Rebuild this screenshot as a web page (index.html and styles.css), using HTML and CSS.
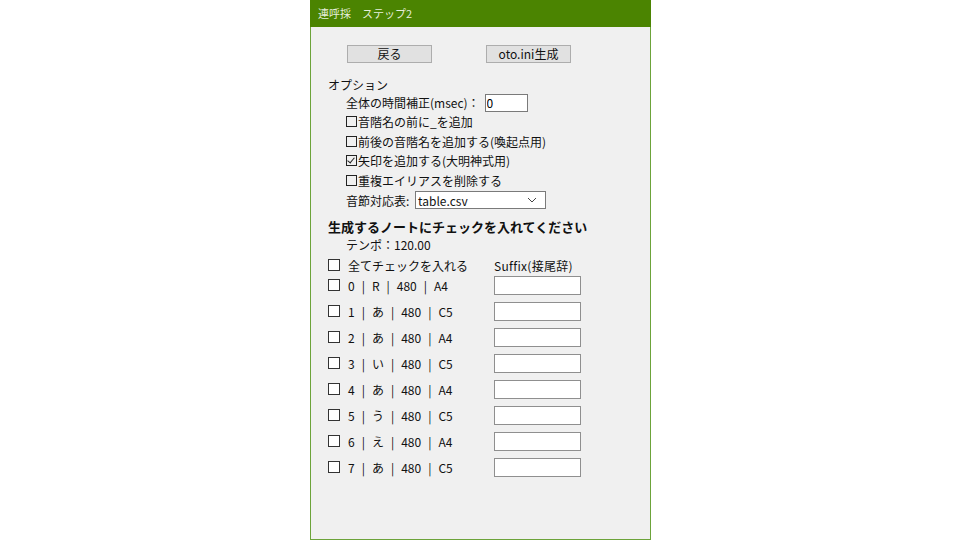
FILE: index.html
```html
<!DOCTYPE html>
<html lang="ja">
<head>
    <meta charset="UTF-8">
    <title>連呼採 ステップ2</title>
    <link rel="stylesheet" href="styles.css">
</head>
<body>

<div class="window">
    <div class="titlebar">連呼採　ステップ2</div>

    <div class="content">
        <div class="buttons">
            <button class="btn">戻る</button>
            <button class="btn">oto.ini生成</button>
        </div>

        <div class="options">
            <div class="section-label">オプション</div>
            <div class="indent">
                <div class="opt-row">
                    <span>全体の時間補正(msec)：</span>
                    <input type="text" class="num-input" value="0">
                </div>
                <div class="opt-row"><span class="box"></span>音階名の前に_を追加</div>
                <div class="opt-row"><span class="box"></span>前後の音階名を追加する(喚起点用)</div>
                <div class="opt-row"><span class="box checked"></span>矢印を追加する(大明神式用)</div>
                <div class="opt-row"><span class="box"></span>重複エイリアスを削除する</div>
                <div class="opt-row select-row">
                    <span class="select-label">音節対応表:</span>
                    <div class="select">
                        <span>table.csv</span>
                        <svg width="10" height="6" viewBox="0 0 10 6"><path d="M1 1 L5 5 L9 1" fill="none" stroke="#444" stroke-width="1"/></svg>
                    </div>
                </div>
            </div>
        </div>

        <div class="notes">
            <div class="heading">生成するノートにチェックを入れてください</div>
            <div class="tempo">テンポ：120.00</div>
            <div class="note-head">
                <label class="note-label"><span class="nbox"></span>全てチェックを入れる</label>
                <span class="suffix-label">Suffix(接尾辞)</span>
            </div>
            <div class="note-list">
                <div class="note-row">
                    <label class="note-label"><span class="nbox"></span><span class="parts"><span>0</span><span>|</span><span>R</span><span>|</span><span>480</span><span>|</span><span>A4</span></span></label>
                    <input type="text" class="suffix">
                </div>
                <div class="note-row">
                    <label class="note-label"><span class="nbox"></span><span class="parts"><span>1</span><span>|</span><span>あ</span><span>|</span><span>480</span><span>|</span><span>C5</span></span></label>
                    <input type="text" class="suffix">
                </div>
                <div class="note-row">
                    <label class="note-label"><span class="nbox"></span><span class="parts"><span>2</span><span>|</span><span>あ</span><span>|</span><span>480</span><span>|</span><span>A4</span></span></label>
                    <input type="text" class="suffix">
                </div>
                <div class="note-row">
                    <label class="note-label"><span class="nbox"></span><span class="parts"><span>3</span><span>|</span><span>い</span><span>|</span><span>480</span><span>|</span><span>C5</span></span></label>
                    <input type="text" class="suffix">
                </div>
                <div class="note-row">
                    <label class="note-label"><span class="nbox"></span><span class="parts"><span>4</span><span>|</span><span>あ</span><span>|</span><span>480</span><span>|</span><span>A4</span></span></label>
                    <input type="text" class="suffix">
                </div>
                <div class="note-row">
                    <label class="note-label"><span class="nbox"></span><span class="parts"><span>5</span><span>|</span><span>う</span><span>|</span><span>480</span><span>|</span><span>C5</span></span></label>
                    <input type="text" class="suffix">
                </div>
                <div class="note-row">
                    <label class="note-label"><span class="nbox"></span><span class="parts"><span>6</span><span>|</span><span>え</span><span>|</span><span>480</span><span>|</span><span>A4</span></span></label>
                    <input type="text" class="suffix">
                </div>
                <div class="note-row">
                    <label class="note-label"><span class="nbox"></span><span class="parts"><span>7</span><span>|</span><span>あ</span><span>|</span><span>480</span><span>|</span><span>C5</span></span></label>
                    <input type="text" class="suffix">
                </div>
            </div>
        </div>
    </div>
</div>

</body>
</html>
```

FILE: styles.css
```css
body { margin: 0; background: #fff; font-family: "Noto Sans CJK JP", "Noto Sans", sans-serif; font-size: 12px; color: #111; }

.window { width: 339px; height: 539px; margin-left: 310px; border: 1px solid #6ca33a; border-top: none; background: #f0f0f0; display: flex; flex-direction: column; }
.titlebar { height: 27px; background: #4b8401; color: #e6eedd; font-size: 11px; line-height: 27px; padding-left: 8px; margin: 0 -1px; }

.content { padding-left: 17px; }

/* top buttons */
.buttons { display: flex; gap: 54px; padding: 18px 0 0 19px; }
.btn { width: 85px; height: 18px; padding: 0; background: #e1e1e1; border: 1px solid #adadad; font-family: inherit; font-size: 12px; line-height: 16px; color: #111; }

/* options */
.options { margin-top: 14px; }
.section-label { height: 16px; line-height: 16px; }
.indent { padding-left: 18px; }
.opt-row { height: 19.5px; display: flex; align-items: center; }
.opt-row:first-child { height: 19px; }
.num-input { box-sizing: border-box; width: 43px; height: 18px; margin-left: 5px; padding: 0 0 0 1px; border: 1px solid #7a7a7a; background: #fff; font-family: inherit; font-size: 12px; }
.box { width: 9px; height: 9px; border: 1px solid #222; margin-right: 1px; position: relative; }
.box.checked::after { content: ""; position: absolute; left: 2px; top: 0; width: 3px; height: 6px; border: solid #222; border-width: 0 1px 1px 0; transform: rotate(40deg); }
.select-row { height: 20px; }
.select-label { width: 69px; flex-shrink: 0; white-space: nowrap; }
.select { box-sizing: border-box; width: 131px; height: 18px; border: 1px solid #7a7a7a; background: #fff; display: flex; align-items: center; justify-content: space-between; padding: 0 8px 0 2px; }

/* notes */
.notes { margin-top: 9px; }
.heading { height: 16px; line-height: 16px; font-weight: bold; font-size: 13px; }
.tempo { height: 20px; line-height: 20px; padding-left: 18px; }
.note-head, .note-row { display: flex; align-items: center; }
.note-head { height: 20px; }
.note-label { width: 166px; display: flex; align-items: center; }
.nbox { width: 10px; height: 10px; border: 1px solid #333; background: #fff; margin-right: 8px; }
.parts { display: flex; gap: 7px; }
.suffix-label { letter-spacing: 0.3px; }
.note-list { display: grid; grid-auto-rows: 26px; margin-top: -3px; }
.note-row { height: 26px; }
.suffix { box-sizing: border-box; width: 87px; height: 19px; padding: 0; border: 1px solid #8f8f8f; background: #fff; }
```
